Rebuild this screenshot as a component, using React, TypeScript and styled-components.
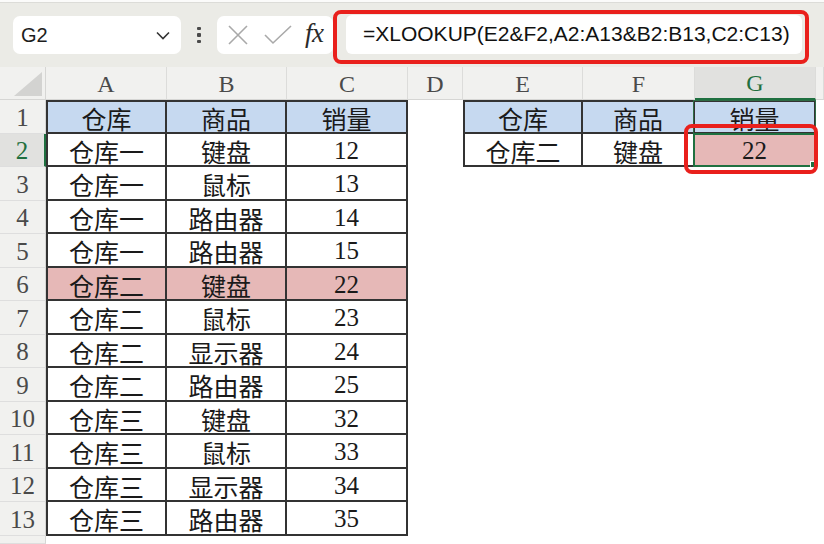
import React from "react";
import styled, {createGlobalStyle, css} from "styled-components";

const GlobalStyle = createGlobalStyle`
	html, body {
		margin: 0;
		padding: 0;
		background: #ffffff;
	}
	body {
		width: 824px;
		height: 544px;
		overflow: hidden;
	}
`;

type Row = [string, string, string];

const left: Row[] = [
	["仓库", "商品", "销量"],
	["仓库一", "键盘", "12"],
	["仓库一", "鼠标", "13"],
	["仓库一", "路由器", "14"],
	["仓库一", "路由器", "15"],
	["仓库二", "键盘", "22"],
	["仓库二", "鼠标", "23"],
	["仓库二", "显示器", "24"],
	["仓库二", "路由器", "25"],
	["仓库三", "键盘", "32"],
	["仓库三", "鼠标", "33"],
	["仓库三", "显示器", "34"],
	["仓库三", "路由器", "35"],
];

const right: Row[] = [
	["仓库", "商品", "销量"],
	["仓库二", "键盘", "22"],
];

const columns = ["A", "B", "C", "D", "E", "F", "G"];
const formula = "=XLOOKUP(E2&F2,A2:A13&B2:B13,C2:C13)";

const App: React.FC = () => {
	return (
		<Page>
			<GlobalStyle />
			<TopStrip />
			<Toolbar>
				<NameBox>
					<span>G2</span>
					<svg width="14" height="9" viewBox="0 0 14 9">
						<path d="M1 1.5 L7 7.5 L13 1.5" fill="none" stroke="#333" strokeWidth="1.6" />
					</svg>
				</NameBox>
				<Dots>
					<i />
					<i />
					<i />
				</Dots>
				<ActionBox>
					<svg width="22" height="22" viewBox="0 0 22 22">
						<path d="M2 2 L20 20 M20 2 L2 20" stroke="#a9a9a9" strokeWidth="1.6" />
					</svg>
					<svg width="28" height="20" viewBox="0 0 28 20">
						<path d="M1 10 L9 18 L27 1" fill="none" stroke="#a9a9a9" strokeWidth="1.6" />
					</svg>
					<Fx>fx</Fx>
				</ActionBox>
				<FormulaFrame>
					<FormulaInput>{formula}</FormulaInput>
				</FormulaFrame>
			</Toolbar>
			<Sheet>
				<Corner />
				{columns.map(c => (
					<ColHead key={c} $active={c === "G"}>
						{c}
					</ColHead>
				))}
				<ColHead />
				{left.map((row, i) => {
					const r = i + 1;
					const other = right[i];
					const fill = r === 1 ? "head" : r === 6 ? "hl" : "none";
					return (
						<React.Fragment key={r}>
							<RowHead $active={r === 2}>{r}</RowHead>
							{row.map((v, j) => (
								<Cell key={j} $fill={fill} $border $top={r === 1} $left={j === 0}>
									{v}
								</Cell>
							))}
							<Cell $fill="none" />
							{other
								? other.map((v, j) => (
										<Cell
											key={j}
											$fill={r === 1 ? "head" : j === 2 ? "hl" : "none"}
											$border
											$top={r === 1}
											$left={j === 0}
											$sel={j === 2 ? (r === 1 ? "thin" : "thick") : undefined}
										>
											{v}
										</Cell>
								  ))
								: [0, 1, 2].map(j => <Cell key={j} $fill="none" />)}
							<Cell $fill="none" />
						</React.Fragment>
					);
				})}
				<RowHead />
				<BlankRow />
				<SelectionMark />
			</Sheet>
		</Page>
	);
};

const Page = styled.div`
	width: 824px;
	height: 544px;
	overflow: hidden;
	display: flex;
	flex-direction: column;
	background: #ffffff;
`;

const TopStrip = styled.div`
	height: 3px;
	background: #fbfbfa;
	border-bottom: 1px solid #dcdcd8;
	box-sizing: border-box;
`;

const Toolbar = styled.div`
	height: 64px;
	flex: none;
	display: flex;
	align-items: center;
	padding-left: 13px;
	background: #ebebe6;
	box-sizing: border-box;
	font-family: "Liberation Sans", "Noto Sans", sans-serif;
`;

const NameBox = styled.div`
	width: 168px;
	height: 38px;
	box-sizing: border-box;
	background: #ffffff;
	border-radius: 7px;
	display: flex;
	align-items: center;
	justify-content: space-between;
	padding: 0 11px 0 8px;
	font-size: 20px;
	color: #1d1d1d;
`;

const Dots = styled.div`
	width: 36px;
	display: flex;
	flex-direction: column;
	align-items: center;
	gap: 3px;

	> i {
		width: 3.5px;
		height: 3.5px;
		border-radius: 1px;
		background: #4a4a4a;
	}
`;

const ActionBox = styled.div`
	width: 116px;
	height: 38px;
	box-sizing: border-box;
	background: #ffffff;
	border-radius: 7px;
	display: flex;
	align-items: center;
	gap: 15px;
	padding-left: 10px;
`;

const Fx = styled.span`
	font-family: "Liberation Serif", serif;
	font-style: italic;
	font-size: 27px;
	color: #2a2a2a;
	margin-left: -2px;
	letter-spacing: -0.5px;
	line-height: 1;
	padding-bottom: 3px;
`;

const FormulaFrame = styled.div`
	width: 476px;
	height: 54px;
	margin-top: 4px;
	box-sizing: border-box;
	border: 4.5px solid #e9201c;
	border-radius: 8px;
	padding: 0.5px 3px 0 9px;
	display: flex;
	align-items: flex-start;
`;

const FormulaInput = styled.div`
	flex: 1;
	height: 39px;
	background: #ffffff;
	border-radius: 6px;
	display: flex;
	align-items: center;
	padding-left: 17px;
	font-size: 21px;
	color: #111111;
	white-space: nowrap;
`;

const Sheet = styled.div`
	position: relative;
	flex: 1;
	display: grid;
	grid-template-columns: 46px 121px 120px 121px 55px 120px 112px 121px 1fr;
	grid-template-rows: 33px repeat(13, 33.5px) 1fr;
	font-family: "Liberation Serif", "Noto Sans CJK SC", serif;
`;

const headerBase = css`
	background: #f1f1ef;
	display: flex;
	align-items: center;
	justify-content: center;
	color: #4a4a4a;
	box-sizing: border-box;
`;

const Corner = styled.div`
	${headerBase};
	position: relative;
	border-right: 1px solid #d6d6d4;
	border-bottom: 1px solid #d6d6d4;

	&::after {
		content: "";
		position: absolute;
		right: 3px;
		bottom: 3px;
		width: 28px;
		height: 24px;
		background: #d3d3d1;
		clip-path: polygon(100% 0, 100% 100%, 0 100%);
	}
`;

const ColHead = styled.div<{$active?: boolean}>`
	${headerBase};
	font-size: 24px;
	padding-top: 2px;
	border-right: 1px solid #dcdcda;
	border-bottom: ${p => (p.$active ? "2px solid #1f7040" : "1px solid #d6d6d4")};
	background: ${p => (p.$active ? "#e1e1df" : "#f1f1ef")};
	color: ${p => (p.$active ? "#1f7040" : "#4a4a4a")};
`;

const RowHead = styled.div<{$active?: boolean}>`
	${headerBase};
	font-size: 25px;
	padding-top: 3px;
	border-bottom: 1px solid #dedede;
	border-right: ${p => (p.$active ? "2px solid #1f7040" : "1px solid #d6d6d4")};
	background: ${p => (p.$active ? "#e1e1df" : "#f1f1ef")};
	color: ${p => (p.$active ? "#1f7040" : "#4a4a4a")};
`;

const fills = {
	head: "#c6d9f0",
	hl: "#e6b8b7",
	none: "#ffffff",
};

const line = "2px solid #333333";

const Cell = styled.div<{
	$fill: keyof typeof fills;
	$border?: boolean;
	$top?: boolean;
	$left?: boolean;
	$sel?: "thin" | "thick";
}>`
	position: relative;
	background: ${p => fills[p.$fill]};
	display: flex;
	align-items: center;
	justify-content: center;
	padding-top: 3px;
	box-sizing: border-box;
	font-size: 25px;
	color: #1a1a1a;
	white-space: nowrap;

	${p =>
		p.$border &&
		css`
			border-right: ${line};
			border-bottom: ${line};
		`}
	${p => p.$top && `border-top: ${line};`}
	${p => p.$left && `border-left: ${line};`}

	${p =>
		p.$sel &&
		css`
			&::before {
				content: "";
				position: absolute;
				left: -2px;
				top: ${p.$sel === "thin" ? "-2px" : "-1px"};
				right: -2px;
				bottom: -2px;
				border: ${p.$sel === "thin" ? "1.5px solid #2e6b44" : "2px solid #1f7040"};
			}
		`}

	${p =>
		p.$sel === "thick" &&
		css`
			&::after {
				content: "";
				position: absolute;
				right: -4px;
				bottom: -4px;
				width: 6px;
				height: 6px;
				background: #1f7040;
				border: 1px solid #ffffff;
			}
		`}
`;

const BlankRow = styled.div`
	grid-column: 2 / -1;
	background: #ffffff;
`;

const SelectionMark = styled.div`
	position: absolute;
	left: 684px;
	top: 57px;
	width: 134px;
	height: 50px;
	box-sizing: border-box;
	border: 4.5px solid #e9201c;
	border-radius: 8px;
	pointer-events: none;
	z-index: 2;
`;

export default App;
